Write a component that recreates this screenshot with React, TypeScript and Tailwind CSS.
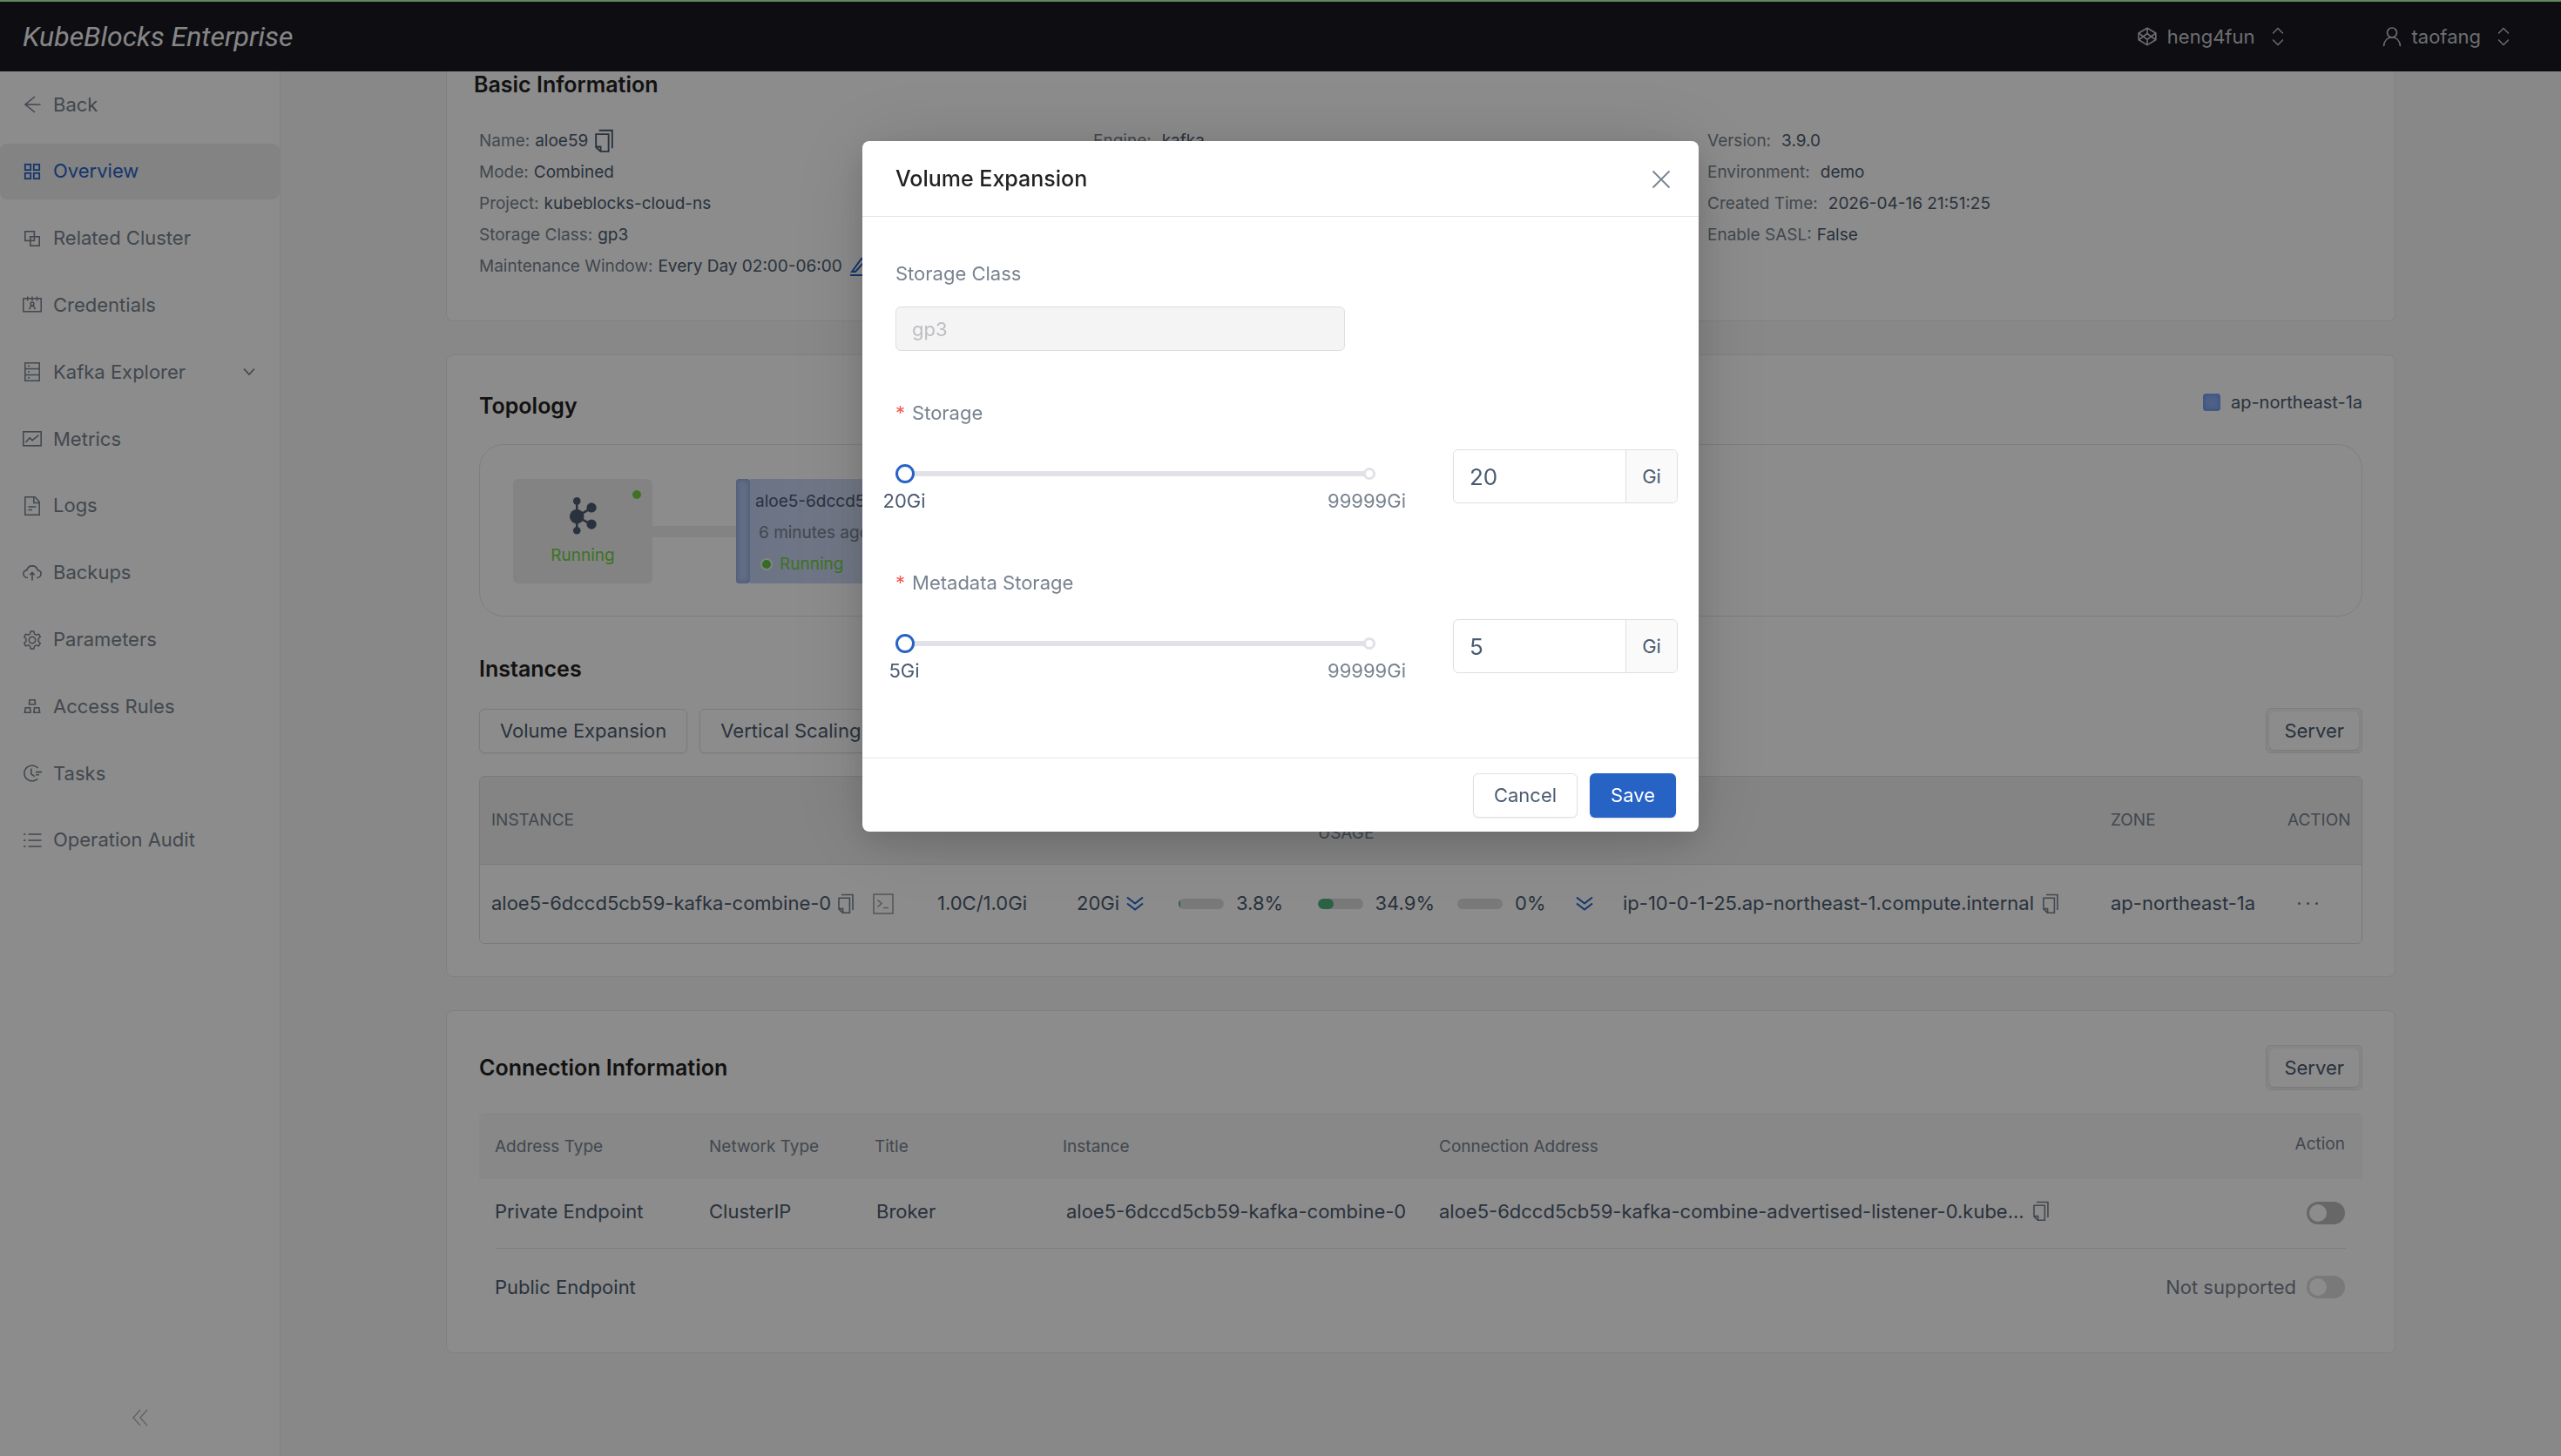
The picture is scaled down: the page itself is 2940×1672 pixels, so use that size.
import React, { useState } from "react";

type IconProps = { className?: string };

function Glyph({ children, className = "size-[22px]", box = "0 0 22 22", width = 1.6 }: IconProps & { children: React.ReactNode; box?: string; width?: number }) {
  return (
    <svg aria-hidden="true" viewBox={box} className={`shrink-0 ${className}`} fill="none" stroke="currentColor" strokeWidth={width}>
      {children}
    </svg>
  );
}

const BackIcon = () => (
  <Glyph><path d="M20.5 11H3M14 2 3 11l11 9" /></Glyph>
);
const OverviewIcon = () => (
  <Glyph width={1.8}>
    <rect x="2.8" y="2.8" width="6.4" height="6.4" />
    <rect x="12.8" y="2.8" width="6.4" height="6.4" />
    <rect x="2.8" y="12.8" width="6.4" height="6.4" />
    <rect x="12.8" y="12.8" width="6.4" height="6.4" />
  </Glyph>
);
const RelatedIcon = () => (
  <Glyph>
    <rect x="2.8" y="2.8" width="10.6" height="10.6" />
    <rect x="8.8" y="8.8" width="10.4" height="10.4" />
  </Glyph>
);
const CredentialsIcon = () => (
  <Glyph width={1.5}>
    <rect x="0.8" y="3.8" width="20.4" height="15" />
    <path d="M5.7 1.5v5M11 1.5v5M16.5 1.5v5" />
    <circle cx="11" cy="10" r="1.9" />
    <path d="M7.8 16.4c.4-2.6 1.6-4.2 3.2-4.2s2.8 1.6 3.2 4.2" />
  </Glyph>
);
const ExplorerIcon = () => (
  <Glyph width={1.5}>
    <rect x="2.8" y="0.8" width="16.4" height="20.4" />
    <path d="M3 7.6h16M3 14.4h16M6 4.2h2M6 11h2M6 17.8h2" />
  </Glyph>
);
const MetricsIcon = () => (
  <Glyph>
    <rect x="0.8" y="2.8" width="20.4" height="16" />
    <path d="M3.5 15 8 9.8l3.2 2.9L18.5 6.5" />
  </Glyph>
);
const LogsIcon = () => (
  <Glyph width={1.5}>
    <path d="M2.8.8h11.4l5 5.4v15H2.8zM12.8 1v6.4h6.2M6.5 12h9M6.5 15.4h4.5" />
  </Glyph>
);
const BackupsIcon = () => (
  <Glyph>
    <path d="M6 16.5C3 16.5.9 14.6.9 12.1c0-2.3 1.7-4 3.9-4.3C5.6 4.8 8 2.9 11 2.9s5.4 1.9 6.2 4.9c2.2.3 3.9 2 3.9 4.3 0 2.5-2.1 4.4-5.1 4.4M11 19.5V11M8.3 13.2 11 10.5l2.7 2.7" />
  </Glyph>
);
const ParametersIcon = () => (
  <Glyph width={1.5}>
    <path d="M9.2.9h3.6l.7 3 2 1.2 3-.9 1.8 3.1-2.2 2.2v3l2.2 2.2-1.8 3.1-3-.9-2 1.2-.7 3H9.2l-.7-3-2-1.2-3 .9-1.8-3.1 2.2-2.2v-3L1.7 7.3l1.8-3.1 3 .9 2-1.2z" strokeLinejoin="round" />
    <circle cx="11" cy="11" r="3.7" />
  </Glyph>
);
const AccessIcon = () => (
  <Glyph>
    <path d="M8 3.8h6l.5 5h-7zM3.2 12.8h5.3l.6 5.4H2.4zM13.5 12.8h5.3l.8 5.4h-6.7z" />
  </Glyph>
);
const TasksIcon = () => (
  <Glyph>
    <path d="M17.6 5A9 9 0 1 0 17.3 17.2M9.8 5.6v6.2l4 2.8M15 9.6h7M15 12.8h4" />
  </Glyph>
);
const AuditIcon = () => (
  <Glyph>
    <path d="M6.5 4H21.5M6.5 11H21.5M6.5 18H21.5M1 4h2.5M1 11h2.5M1 18h2.5" />
  </Glyph>
);
const CopyIcon = ({ className = "h-6 w-[18px]" }: IconProps) => (
  <Glyph className={className} box="0 0 18 24" width={1.6}>
    <path d="M4 1.5h13v17.5M1 5.2h12.4v17H5.4L1 18zM1.4 17.6h4.2v4.4" />
  </Glyph>
);
const TerminalIcon = () => (
  <Glyph className="size-6" box="0 0 24 24">
    <rect x="1" y="1" width="22" height="22" />
    <path d="m5.5 7.5 4.5 4-4.5 4M12 16.5h6" />
  </Glyph>
);
const DoubleDown = () => (
  <Glyph className="size-5" box="0 0 20 20" width={2}>
    <path d="m1 2.5 9 7 9-7M1 9.5l9 7 9-7" />
  </Glyph>
);
const UpDown = () => (
  <Glyph className="h-[22px] w-3" box="0 0 12 22" width={1.5}>
    <path d="m0 7.500 6-6 6 6M0 14.500l6 6 6-6" />
  </Glyph>
);
const CubeIcon = () => (
  <Glyph width={1.6}>
    <path d="M11 1.200 20.800 7v7.800L11 20.600 1.200 14.800V7zM11 1.200v6.300M11 14.300v6.300M1.200 7 11 14.300 20.800 7M1.200 14.800 11 7.500l9.800 7.300" strokeLinejoin="round" />
  </Glyph>
);
const UserIcon = () => (
  <Glyph width={1.7}>
    <circle cx="11" cy="6.5" r="5.500" />
    <path d="M1.500 22c.5-6 4.200-10 9.500-10s9 4 9.500 10" />
  </Glyph>
);
const KafkaIcon = () => (
  <svg aria-hidden="true" viewBox="0 0 94 130" className="h-[43px] w-[31px]" fill="currentColor" stroke="currentColor">
    <path d="M25 13v102M25 67l51-30M25 67l51 28" strokeWidth="8" />
    <g stroke="none">
      <circle cx="25" cy="13" r="13" />
      <circle cx="25" cy="67" r="25" />
      <circle cx="25" cy="116" r="13" />
      <circle cx="76" cy="36" r="17" />
      <circle cx="76" cy="94" r="17" />
    </g>
  </svg>
);

const nav = [
  { label: "Back", icon: BackIcon },
  { label: "Overview", icon: OverviewIcon, active: true },
  { label: "Related Cluster", icon: RelatedIcon },
  { label: "Credentials", icon: CredentialsIcon },
  { label: "Kafka Explorer", icon: ExplorerIcon, expandable: true },
  { label: "Metrics", icon: MetricsIcon },
  { label: "Logs", icon: LogsIcon },
  { label: "Backups", icon: BackupsIcon },
  { label: "Parameters", icon: ParametersIcon },
  { label: "Access Rules", icon: AccessIcon },
  { label: "Tasks", icon: TasksIcon },
  { label: "Operation Audit", icon: AuditIcon },
];

function Header() {
  return (
    <header className="flex h-[82px] shrink-0 items-center justify-between bg-[#191922] pt-0.5 pr-[60px] pl-[26px] text-[#c6c8cc]">
      <span className="font-[Roboto,sans-serif] text-[32px] leading-10 text-[#f5f5f5] italic">KubeBlocks Enterprise</span>
      <div className="flex items-center gap-[114px]">
        <button type="button" className="flex items-center gap-3">
          <CubeIcon />
          heng4fun
          <span className="ml-2"><UpDown /></span>
        </button>
        <button type="button" className="flex items-center gap-3">
          <UserIcon />
          taofang
          <span className="ml-2"><UpDown /></span>
        </button>
      </div>
    </header>
  );
}

function Sidebar() {
  return (
    <aside className="flex w-[322px] shrink-0 flex-col justify-between border-r border-[#ececee] bg-white pt-1.5 pb-[34px] text-[#78838f]">
      <nav className="flex h-[909px] flex-col justify-between">
        {nav.map(({ label, icon: Icon, active, expandable }) => (
          <a
            key={label}
            href="#"
            className={`flex h-16 items-center gap-[13px] rounded-lg pr-7 pl-[26px] ${active ? "bg-[#efefef] text-[#2762c5]" : ""}`}
          >
            <Icon />
            {label}
            {expandable && (
              <Glyph className="ml-auto h-2.5 w-3.5" box="0 0 14 10" width={1.8}><path d="m1 1.5 6 6.5 6-6.5" /></Glyph>
            )}
          </a>
        ))}
      </nav>
      <button type="button" aria-label="Collapse sidebar" className="self-center text-[#b4b7bc]">
        <Glyph className="size-5" box="0 0 20 20" width={1.5}><path d="m10 1-8 9 8 9M18 1l-8 9 8 9" /></Glyph>
      </button>
    </aside>
  );
}

function Field({ label, wide = false, children }: { label: string; wide?: boolean; children: React.ReactNode }) {
  return (
    <div className={`flex h-9 items-center ${wide ? "gap-3" : "gap-1.5"}`}>
      <dt className="text-[#78838f]">{label}</dt>
      <dd className="flex items-center gap-2">{children}</dd>
    </div>
  );
}

function BasicInfo() {
  return (
    <section className="h-[287px] rounded-b-lg border border-t-0 border-[#e9e9eb] bg-white pr-[84px] pl-[37px]">
      <h2 className="-ml-1.5 text-[25px] leading-[30px] font-semibold text-[#222]">Basic Information</h2>
      <div className="mt-8 grid grid-cols-3 items-start text-[19px]">
        <dl className="flex flex-col">
          <Field label="Name:">
            aloe59
            <button type="button" aria-label="Copy name"><CopyIcon className="h-7 w-[21px]" /></button>
          </Field>
          <Field label="Mode:">Combined</Field>
          <Field label="Project:">kubeblocks-cloud-ns</Field>
          <Field label="Storage Class:">gp3</Field>
          <Field label="Maintenance Window:">
            Every Day 02:00-06:00
            <button type="button" aria-label="Edit maintenance window" className="text-[#2762c5]">
              <Glyph width={2}><path d="M1 21h20M3 17 14 2l4 3L7 17z" /></Glyph>
            </button>
          </Field>
        </dl>
        <dl className="flex flex-col">
          <Field label="Engine:" wide>kafka</Field>
        </dl>
        <dl className="flex flex-col">
          <Field label="Version:" wide>3.9.0</Field>
          <Field label="Environment:" wide>demo</Field>
          <Field label="Created Time:" wide>2026-04-16 21:51:25</Field>
          <Field label="Enable SASL:">False</Field>
        </dl>
      </div>
    </section>
  );
}

function OutlineButton({ children }: { children: React.ReactNode }) {
  return (
    <button type="button" className="flex h-[51px] items-center rounded-md border border-[#dfe0e4] bg-white px-[23px] shadow-xs">
      {children}
    </button>
  );
}

function ServerButton() {
  return (
    <button type="button" className="rounded-md border border-[#e4e5e8] bg-[#f6f6f7] p-[3px]">
      <span className="flex h-11 items-center rounded-md bg-white px-[17px] shadow-sm">Server</span>
    </button>
  );
}

function Topology() {
  return (
    <div className="mt-7 flex h-[198px] items-center rounded-[28px] border border-[#e4e5e8] pt-0.5 pl-[38px]">
      <div className="relative flex h-[120px] w-40 flex-col items-center justify-end gap-3 rounded-md bg-[#efefef] pb-5">
        <span className="absolute top-[13px] right-[13px] size-2.5 rounded-full bg-[#70d140]" />
        <KafkaIcon />
        <span className="text-[19px] leading-6 text-[#70d140]">Running</span>
      </div>
      <div className="h-[13px] w-24 bg-[#efefef]" />
      <div className="h-[120px] w-4 rounded-sm bg-[#b4c6ee] shadow-[inset_0_0_5px_2px_#8fabe6]" />
      <div className="flex h-[120px] w-[300px] flex-col justify-center gap-3 bg-linear-to-r from-[#c3d2f4] to-[#e3e6f4] pt-1 pl-1.5 text-[19px] leading-6">
        <span className="whitespace-nowrap">aloe5-6dccd5c</span>
        <span className="pl-1 text-[#78838f]">6 minutes ago</span>
        <span className="flex items-center gap-2 pl-1.5 text-[#70d140]">
          <i className="size-3.5 rounded-full border-2 border-[#e8f5e0] bg-[#61c24a]" />
          Running
        </span>
      </div>
    </div>
  );
}

function Usage({ label, children }: { label: string; children?: React.ReactNode }) {
  return (
    <span className="flex items-center gap-3.5">
      <span className="flex h-3 w-[52px] overflow-hidden rounded-full bg-[#dddddf]">{children}</span>
      {label}
    </span>
  );
}

function InstancesTable() {
  return (
    <div className="mt-[26px] overflow-hidden rounded-md border border-[#dddee2]">
      <table className="w-full table-fixed text-left whitespace-nowrap">
        <colgroup>
          <col className="w-[512px]" />
          <col className="w-[160px]" />
          <col className="w-[117px]" />
          <col className="w-[160px]" />
          <col className="w-[160px]" />
          <col className="w-[136px]" />
          <col className="w-[54px]" />
          <col className="w-[560px]" />
          <col className="w-[203px]" />
          <col />
        </colgroup>
        <thead>
          <tr className="h-[100px] border-b border-[#dddee2] bg-[#f0f0f0] text-[19px] text-[#78838f] [&>th]:px-[13px] [&>th]:font-normal">
            <th scope="col">INSTANCE</th>
            <th scope="col">SPEC</th>
            <th scope="col">STORAGE</th>
            <th scope="col">CPU</th>
            <th scope="col" className="leading-[30px]">MEMORY<br />USAGE</th>
            <th scope="col">DISK</th>
            <th scope="col"></th>
            <th scope="col">NODE</th>
            <th scope="col">ZONE</th>
            <th scope="col">ACTION</th>
          </tr>
        </thead>
        <tbody>
          <tr className="h-[91px] [&>td]:px-[13px]">
            <td>
              <span className="flex items-center gap-2">
                aloe5-6dccd5cb59-kafka-combine-0
                <button type="button" aria-label="Copy instance" className="text-[#78838f]"><CopyIcon /></button>
                <button type="button" aria-label="Open terminal" className="ml-3.5 text-[#9aa2ac]"><TerminalIcon /></button>
              </span>
            </td>
            <td>1.0C/1.0Gi</td>
            <td>
              <span className="flex items-center gap-2">20Gi<span className="text-[#2762c5]"><DoubleDown /></span></span>
            </td>
            <td><Usage label="3.8%"><span className="w-0.5 bg-[#4cb57c]" /></Usage></td>
            <td><Usage label="34.9%"><span className="w-[18px] rounded-full bg-[#4cb57c]" /></Usage></td>
            <td><Usage label="0%" /></td>
            <td className="text-[#2762c5]"><DoubleDown /></td>
            <td>
              <span className="flex items-center gap-2.5">
                ip-10-0-1-25.ap-northeast-1.compute.internal
                <button type="button" aria-label="Copy node" className="text-[#78838f]"><CopyIcon /></button>
              </span>
            </td>
            <td>ap-northeast-1a</td>
            <td>
              <button type="button" aria-label="More actions" className="ml-3 flex gap-[7px] text-[#78838f]">
                <i className="size-[3px] rounded-full bg-current" />
                <i className="size-[3px] rounded-full bg-current" />
                <i className="size-[3px] rounded-full bg-current" />
              </button>
            </td>
          </tr>
        </tbody>
      </table>
    </div>
  );
}

function Toggle({ label, disabled = false }: { label: string; disabled?: boolean }) {
  return (
    <input
      type="checkbox"
      role="switch"
      aria-label={label}
      disabled={disabled}
      className="h-[26px] w-11 shrink-0 appearance-none rounded-full bg-[#bcbcbe] p-[3px] before:block before:size-5 before:rounded-full before:bg-white disabled:bg-[#dcdcde]"
    />
  );
}

function ConnectionTable() {
  return (
    <table className="mt-[26px] w-full table-fixed text-left whitespace-nowrap">
      <colgroup>
        <col className="w-[264px]" />
        <col className="w-[190px]" />
        <col className="w-[216px]" />
        <col className="w-[432px]" />
        <col />
        <col className="w-[260px]" />
      </colgroup>
      <thead>
        <tr className="h-[76px] bg-[#f7f7f7] text-[19px] text-[#78838f] [&>th]:font-normal [&>th]:pt-0.5">
          <th scope="col" className="rounded-tl-md pl-[18px]">Address Type</th>
          <th scope="col">Network Type</th>
          <th scope="col">Title</th>
          <th scope="col">Instance</th>
          <th scope="col">Connection Address</th>
          <th scope="col" className="rounded-tr-md pr-5 pb-1.5 text-right">Action</th>
        </tr>
      </thead>
      <tbody>
        <tr className="h-20 bg-[linear-gradient(#e4e5e8,#e4e5e8)] bg-[length:calc(100%-38px)_1px] bg-bottom bg-no-repeat [&>td]:pb-1.5">
          <td className="pl-[18px]">Private Endpoint</td>
          <td>ClusterIP</td>
          <td className="pl-0.5">Broker</td>
          <td className="pl-1">aloe5-6dccd5cb59-kafka-combine-0</td>
          <td>
            <span className="flex items-center gap-2.5">
              aloe5-6dccd5cb59-kafka-combine-advertised-listener-0.kube...
              <button type="button" aria-label="Copy address" className="text-[#78838f]"><CopyIcon /></button>
            </span>
          </td>
          <td className="pt-1 pr-5">
            <span className="flex justify-end"><Toggle label="Private endpoint" /></span>
          </td>
        </tr>
        <tr className="h-[88px]">
          <td className="pl-[18px]" colSpan={5}>Public Endpoint</td>
          <td className="pr-5 text-[#78838f]">
            <span className="flex items-center justify-end gap-3">Not supported<Toggle label="Public endpoint" disabled /></span>
          </td>
        </tr>
      </tbody>
    </table>
  );
}

function SizeField({ id, label, min }: { id: string; label: string; min: number }) {
  const [value, setValue] = useState(min);
  const max = 99999;
  return (
    <div>
      <label htmlFor={id} className="flex h-7 items-center gap-2 text-[#78838f]">
        <span className="text-[#f5544f]">*</span>
        {label}
      </label>
      <div className="mt-7 flex items-start justify-between">
        <div className="w-[551px]">
          <div className="relative flex h-14 items-center">
            <input
              type="range"
              aria-label={`${label} slider`}
              min={min}
              max={max}
              value={value}
              onChange={(e) => setValue(Number(e.target.value))}
              className="h-[22px] w-full appearance-none bg-transparent [&::-webkit-slider-runnable-track]:h-1.5 [&::-webkit-slider-runnable-track]:rounded-full [&::-webkit-slider-runnable-track]:bg-[#e1e2e8] [&::-webkit-slider-thumb]:-mt-2 [&::-webkit-slider-thumb]:size-[22px] [&::-webkit-slider-thumb]:appearance-none [&::-webkit-slider-thumb]:rounded-full [&::-webkit-slider-thumb]:border-[3px] [&::-webkit-slider-thumb]:border-[#2762c5] [&::-webkit-slider-thumb]:bg-white"
            />
            <span className="pointer-events-none absolute right-0 size-3.5 rounded-full border-[3px] border-[#e1e2e8] bg-white" />
          </div>
          <div className="-mx-[38px] -mt-[11px] flex justify-between text-center leading-7">
            <span className="w-24">{min}Gi</span>
            <span className="w-24 text-[#78838f]">{max}Gi</span>
          </div>
        </div>
        <div className="flex h-[62px] w-[258px] overflow-hidden rounded-md border border-[#dddee4]">
          <input
            id={id}
            type="text"
            inputMode="numeric"
            value={value}
            onChange={(e) => setValue(Number(e.target.value) || min)}
            className="min-w-0 flex-1 pl-[18px] text-[26px]"
          />
          <span className="flex w-[59px] items-center justify-center border-l border-[#dddee4] bg-[#fafafa]">Gi</span>
        </div>
      </div>
    </div>
  );
}

function VolumeDialog() {
  return (
    <div className="fixed inset-0 flex items-start justify-center bg-black/45 pt-[162px]">
      <div
        role="dialog"
        aria-modal="true"
        aria-labelledby="dialog-title"
        className="w-[960px] rounded-lg bg-white shadow-[0_12px_32px_rgba(0,0,0,0.12),0_6px_96px_rgba(0,0,0,0.14)]"
      >
        <div className="flex h-[87px] items-center justify-between border-b border-[#e4e5e9] pt-0.5 pr-8 pl-[38px]">
          <h1 id="dialog-title" className="text-[25px] font-medium text-[#222]">Volume Expansion</h1>
          <button type="button" aria-label="Close" className="text-[#78838f]">
            <Glyph width={1.8}><path d="m1.5 1.5 19 19M20.5 1.5l-19 19" /></Glyph>
          </button>
        </div>
        <form className="pt-[51px] pr-6 pb-[86px] pl-[38px]" onSubmit={(e) => e.preventDefault()}>
          <label htmlFor="storage-class" className="flex h-7 items-center text-[#78838f]">Storage Class</label>
          <input
            id="storage-class"
            disabled
            value="gp3"
            className="mt-6 block h-[51px] w-[516px] rounded-md border border-[#dddee4] bg-[#f4f4f4] px-[18px] text-[#bcbec2]"
          />
          <div className="mt-[57px] flex flex-col gap-[66px]">
            <SizeField id="storage" label="Storage" min={20} />
            <SizeField id="metadata-storage" label="Metadata Storage" min={5} />
          </div>
        </form>
        <div className="flex h-[85px] items-center justify-end gap-3.5 border-t border-[#e4e5e9] pr-[26px]">
          <OutlineButton>Cancel</OutlineButton>
          <button type="button" className="flex h-[51px] items-center rounded-md bg-[#2762c5] px-6 text-white shadow-sm">Save</button>
        </div>
      </div>
    </div>
  );
}

export default function App() {
  return (
    <div className="flex h-screen flex-col overflow-hidden bg-[#f8f8f8] font-[Inter,'Liberation_Sans',sans-serif] text-[22px] text-[#4b5b70]">
      <Header />
      <div className="flex min-h-0 flex-1">
        <Sidebar />
        <main className="min-w-0 flex-1 overflow-hidden">
          <div className="mx-auto flex max-w-[2238px] flex-col gap-[38px]">
            <BasicInfo />
            <section className="rounded-lg border border-[#e9e9eb] bg-white px-[37px] pt-[38px] pb-[37px]">
              <div className="flex h-9 items-center justify-between">
                <h2 className="pt-1.5 text-[25px] font-semibold text-[#222]">Topology</h2>
                <span className="flex items-center gap-3 pb-1 text-[20px]">
                  <i className="size-5 rounded-sm bg-[#8fb0f5] shadow-[inset_0_0_5px_2px_#6f98f0]" />
                  ap-northeast-1a
                </span>
              </div>
              <Topology />
              <h2 className="mt-[42px] text-[25px] leading-9 font-semibold text-[#222]">Instances</h2>
              <div className="mt-[27px] flex items-center justify-between">
                <div className="flex gap-3.5">
                  <OutlineButton>Volume Expansion</OutlineButton>
                  <OutlineButton>Vertical Scaling</OutlineButton>
                </div>
                <ServerButton />
              </div>
              <InstancesTable />
            </section>
            <section className="rounded-lg border border-[#e9e9eb] bg-white px-[37px] pt-[39px] pb-[31px]">
              <div className="flex items-center justify-between">
                <h2 className="text-[25px] leading-9 font-semibold text-[#222]">Connection Information</h2>
                <ServerButton />
              </div>
              <ConnectionTable />
            </section>
          </div>
        </main>
      </div>
      <VolumeDialog />
      <div className="fixed inset-x-0 top-0 h-0.5 bg-[#5f8a5f]" />
    </div>
  );
}
